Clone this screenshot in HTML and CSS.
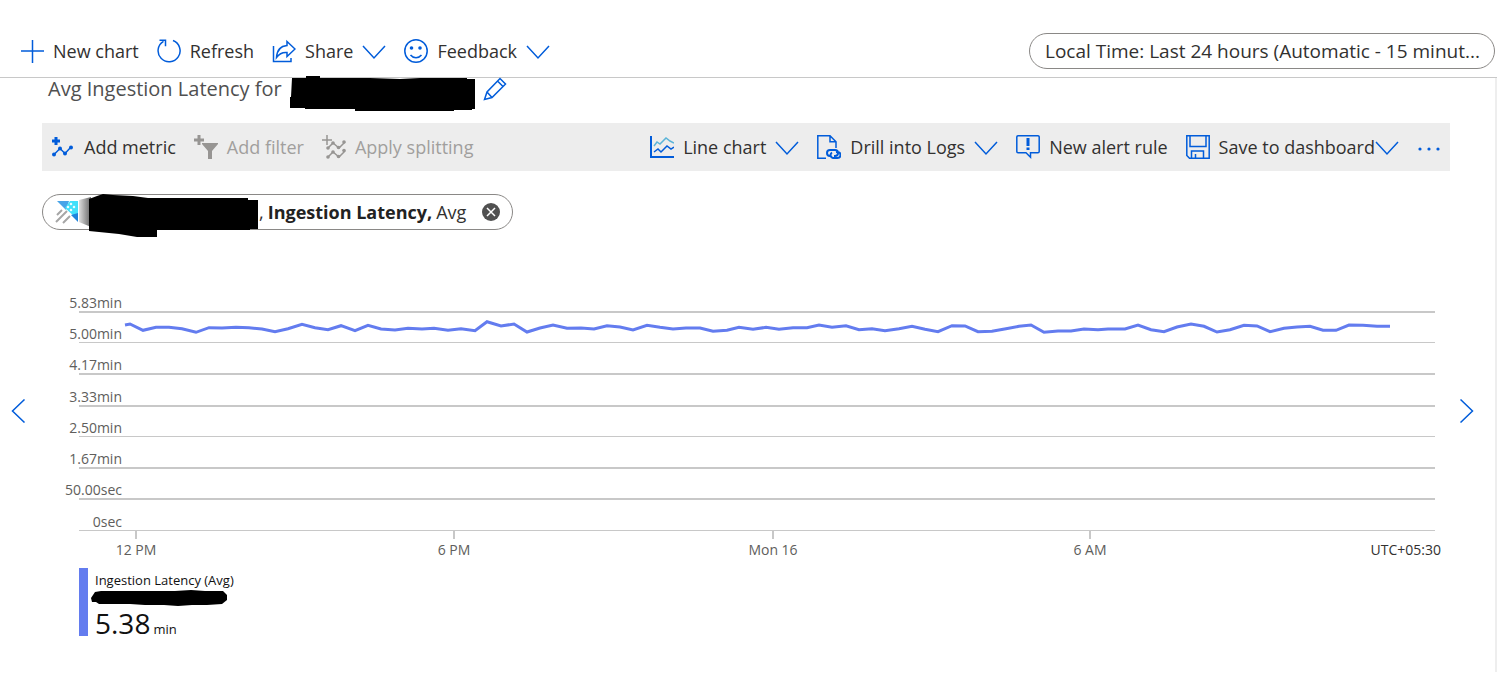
FILE: index.html
```html
<!DOCTYPE html>
<html lang="en">
<head>
  <meta charset="UTF-8">
  <meta name="viewport" content="width=device-width, initial-scale=1.0">
  <title>Metrics</title>
  <link rel="stylesheet" href="styles.css">
</head>
<body>

  <header class="command-bar">
    <button class="cmd">
      <svg class="icon" viewBox="0 0 24 24"><path d="M12.500 1v23M1 12h23"/></svg>
      New chart
    </button>
    <button class="cmd">
      <svg class="icon" viewBox="0 0 24 24"><path d="M16 1.500a11 11 0 1 1-9.500 .8M2.500 1.200h6v6"/></svg>
      Refresh
    </button>
    <button class="cmd">
      <svg class="icon" viewBox="0 0 24 24"><path d="M1.500 7v15.500H19V19M15 2.500l8 7.500-8 7.500V13.500C10 13 7 15 4.500 18.500 5 11 9 7 15 6.500z"/></svg>
      Share
      <svg class="icon" viewBox="0 0 24 24"><path d="M1 7l11 12L23 7"/></svg>
    </button>
    <button class="cmd">
      <svg class="icon" viewBox="0 0 24 24"><circle cx="12" cy="12" r="11.200"/><path d="M6.500 16c3 3.700 8 3.700 11 0"/><circle class="solid" cx="7.500" cy="9" r="1.800"/><circle class="solid" cx="16" cy="9" r="1.800"/></svg>
      Feedback
      <svg class="icon" viewBox="0 0 24 24"><path d="M1 7l11 12L23 7"/></svg>
    </button>
    <button class="time-range">Local Time: Last 24 hours (Automatic - 15 minut...</button>
  </header>

  <main class="blade">
    <div class="chart-title">
      <h1>Avg Ingestion Latency for</h1>
      <svg class="title-mask" viewBox="0 0 185 35"><path d="M2 2l14 0V0h14v2h50l30 1 20-1h47v1h18v30h-13v1h-18v1H65v-2H15v-1H0V21h1z"/></svg>
      <button class="edit" aria-label="Edit title">
        <svg class="icon" viewBox="0 0 24 24"><path d="M1.500 22.500L4 15 17 1.500l5.500 5.500L9 20.500zM4 15l5 5.500M14.500 4l5.500 5.500"/></svg>
      </button>
    </div>

    <div class="toolbar">
      <button class="cmd">
        <svg class="icon" viewBox="0 0 24 24"><path class="plus" d="M5 2v8M1 6h8"/><path d="M3 19.500l6-6 5 5L20 12"/><g class="solid"><circle cx="3" cy="19.500" r="2"/><circle cx="9" cy="13.500" r="2"/><circle cx="14" cy="18.500" r="2"/><circle cx="20" cy="12.500" r="2"/></g></svg>
        Add metric
      </button>
      <button class="cmd" disabled>
        <svg class="icon" viewBox="0 0 24 24"><path class="plus" d="M5 0v10M0 5h10"/><path class="solid" d="M8 8h16v1l-6 7v8h-4v-8L8 9z"/></svg>
        Add filter
      </button>
      <button class="cmd" disabled>
        <svg class="icon" viewBox="0 0 24 24"><path d="M5 0v10M0 5h10M6 13l5-5 6 5 6-6M6 22l5-5 6 5 6-6"/><g class="solid"><circle cx="6" cy="13" r="1.800"/><circle cx="11" cy="8" r="1.800"/><circle cx="16.500" cy="12.500" r="1.800"/><circle cx="22" cy="7" r="1.800"/><circle cx="6" cy="22" r="1.800"/><circle cx="11" cy="17" r="1.800"/><circle cx="16.500" cy="21.500" r="1.800"/><circle cx="22" cy="15.500" r="1.800"/></g></svg>
        Apply splitting
      </button>

      <div class="toolbar-right">
        <button class="cmd">
          <svg class="icon" viewBox="0 0 24 24"><path class="sky" d="M4 11l3-4 3 2 6-6 4 3 4 2"/><path d="M4 17l4-3 3 3 6-6 4 3 3-2"/><path class="axis" d="M1 1v21h23"/></svg>
          Line chart
          <svg class="icon" viewBox="0 0 24 24"><path d="M1 7l11 12L23 7"/></svg>
        </button>
        <button class="cmd">
          <svg class="icon" viewBox="0 0 24 24"><path d="M9 23.200H.8V.8H13l6 6V13M13 .8v6h6"/><path class="link" d="M14 21h-1a3 3 0 0 1 0-6h5a3 3 0 0 1 0 6h-1M19 17h1.500a3 3 0 0 1 0 6H16a3 3 0 0 1-1-5.500"/></svg>
          Drill into Logs
          <svg class="icon" viewBox="0 0 24 24"><path d="M1 7l11 12L23 7"/></svg>
        </button>
        <button class="cmd">
          <svg class="icon" viewBox="0 0 24 24"><path d="M2 .8h20a1.200 1.200 0 0 1 1.200 1.200v14.500a1.200 1.200 0 0 1-1.200 1.200h-7.500v4.500l-4.500-4.500H2a1.200 1.200 0 0 1-1.200-1.200V2A1.200 1.200 0 0 1 2 .8z"/><path class="mark" d="M12 3v8M12 12.500v2.500"/></svg>
          New alert rule
        </button>
        <button class="cmd save">
          <svg class="icon" viewBox="0 0 24 24"><path d="M.8.8h22.400v22.400H3.500L.8 20.500zM4 .8v10.700h16V.8M5.500 23v-7h12v7M9.500 23v-4"/></svg>
          <span>Save to dashboard</span>
          <svg class="icon" viewBox="0 0 24 24"><path d="M1 7l11 12L23 7"/></svg>
        </button>
        <button class="cmd" aria-label="More">
          <svg class="icon" viewBox="0 0 24 24"><g class="solid"><circle cx="3" cy="14" r="1.600"/><circle cx="12" cy="14" r="1.600"/><circle cx="21" cy="14" r="1.600"/></g></svg>
        </button>
      </div>
    </div>

    <div class="metric-pill">
      <svg class="icon resource" viewBox="0 0 24 24"><path fill="#48a4e8" d="M2 1h12l-3 9z"/><path fill="#42e0fa" d="M15 1h8v13l-3 3-10-9z"/><path fill="#1f83dc" d="M23 13v9l-7-7z"/><g fill="#fff"><path d="M16 2.500l1.500 1.500L16 5.500 14.500 4zM13 5.500L14.500 7 13 8.500 11.500 7zM19 5.500L20.500 7 19 8.500 17.500 7zM16 8.500l1.500 1.500-1.500 1.500-1.500-1.500z"/></g><path stroke="#a6a6a6" stroke-width="2" d="M2 15l5-5M1 22l11-11M8 23l7-7"/></svg>
      <svg class="pill-mask" viewBox="0 0 180 44"><defs><linearGradient id="fade"><stop offset="0" stop-color="#ddd"/><stop offset="1" stop-color="#666"/></linearGradient></defs><path fill="url(#fade)" d="M0 6l12-3v30L0 28z"/><path d="M10 5l8-3 6-2 10 1 20 1 15 2h100v2h10v29h-8v1H78v7H58l-18-3-30-3z"/></svg>
      <span class="comma">,</span>
      <strong>Ingestion Latency,</strong>
      <span>Avg</span>
      <button class="remove" aria-label="Remove metric">
        <svg viewBox="0 0 18 18"><circle cx="9" cy="9" r="9"/><path d="M5 5l8 8M13 5l-8 8"/></svg>
      </button>
    </div>

    <section class="chart">
      <button class="nav" aria-label="Previous">
        <svg class="icon" viewBox="0 0 24 24"><path d="M13.500 .5L1.500 12l12 11.500"/></svg>
      </button>

      <div class="plot">
        <div class="grid">
          <div class="line thick"><span>5.83min</span></div>
          <div class="line"><span>5.00min</span></div>
          <div class="line thick"><span>4.17min</span></div>
          <div class="line thick"><span>3.33min</span></div>
          <div class="line"><span>2.50min</span></div>
          <div class="line thick"><span>1.67min</span></div>
          <div class="line thick"><span>50.00sec</span></div>
          <div class="line"><span>0sec</span></div>
          <svg class="series" viewBox="79 281 1356 250" preserveAspectRatio="none">
            <polyline points="125,325 130,324 143,330.300 156,327.300 169,327.300 182,328.700 196,332.300 209,327.700 222,328 236,327.300 249,327.700 262,329 275,331.700 288,328.700 302,324.300 315,327.700 328,329.700 341,325.700 355,330.700 368,325.300 381,329 395,330 408,328.300 422,329 434,328.300 448,330.300 461,328.700 475,330.700 487,321.700 501,326 514,324 527,332 540,328 553,325 567,328.300 581,328 594,329 607,325.700 620,327 633,330 647,325.300 660,327.300 673,329 686,328 700,328 713,331.300 727,330.300 739,327.300 753,329.300 766,327.300 779,329.300 793,327.700 807,327.700 819,325 832,327.300 846,325.700 859,329.700 872,328.700 885,330.700 899,328.700 912,326.300 925,329.300 938,331.700 952,325.700 965,326 978,331.700 992,331.300 1006,328.700 1019,326.300 1031,325 1044,332.300 1058,331 1071,331 1084,329 1098,329.700 1108,329 1125,329 1138,325 1151,329.700 1164,331.700 1177,327 1191,324 1204,326.300 1217,332 1230,329.700 1244,325.300 1257,326 1270,331.700 1284,328.300 1297,327 1310,326.300 1323,330.300 1336,330.300 1349,325 1363,325.300 1377,326.300 1390,326.300"/>
          </svg>
        </div>
        <div class="x-axis">
          <span class="tick">12 PM</span>
          <span class="tick">6 PM</span>
          <span class="tick">Mon 16</span>
          <span class="tick">6 AM</span>
          <span class="zone">UTC+05:30</span>
        </div>
      </div>

      <button class="nav next" aria-label="Next">
        <svg class="icon" viewBox="0 0 24 24"><path d="M.5 .5L12.500 12 .5 23.500"/></svg>
      </button>
    </section>

    <div class="legend">
      <div class="legend-name">Ingestion Latency (Avg)</div>
      <svg class="legend-mask" viewBox="0 0 136 16"><path d="M0 8l4-6 6-1h44l30 0 16-1 14 1h18l4 4v5l-5 4-15 1-15 0-14 1-14-1H54l-15-1H8l-3-2H1z"/></svg>
      <div class="legend-value">5.38<small>min</small></div>
    </div>
  </main>

</body>
</html>
```
FILE: styles.css
```css
* { margin: 0; padding: 0; box-sizing: border-box; }

body {
  font-family: 'Open Sans', 'Noto Sans', sans-serif;
  font-size: 18px;
  line-height: 24px;
  color: #323130;
  background: #fff;
}

button {
  font: inherit;
  color: inherit;
  background: none;
  border: none;
  cursor: pointer;
  white-space: nowrap;
}

svg { display: block; flex-shrink: 0; }

.icon {
  width: 24px;
  height: 24px;
  fill: none;
  stroke: #015cda;
  stroke-width: 1.500;
}

.icon .solid { fill: #015cda; stroke: none; }
.icon .plus { stroke-width: 3; }
.icon .axis { stroke-width: 2; }
.icon .mark { stroke-width: 3; }
.icon .sky { stroke: #5bb4d8; }
.icon .link { stroke-width: 2; }
.icon.resource { stroke: none; }

.cmd {
  display: flex;
  align-items: center;
  gap: 9px;
}

.cmd:disabled { color: #a19f9d; }
.cmd:disabled .icon { stroke: #979593; }
.cmd:disabled .solid { fill: #979593; }

.command-bar {
  display: flex;
  align-items: center;
  gap: 18px;
  padding: 33px 2px 8px 20px;
  border-bottom: 1px solid #c8c8c8;
}

.time-range {
  width: 466px;
  height: 36px;
  margin-left: auto;
  padding: 0 15px;
  border: 1px solid #8a8886;
  border-radius: 18px;
  font-size: 19px;
  text-align: left;
  overflow: hidden;
}

.blade {
  min-height: 594px;
  border-right: 2px solid #eee;
}

.chart-title {
  display: flex;
  align-items: center;
  gap: 8px;
  height: 22px;
  padding-left: 48px;
}

.chart-title h1 {
  font-size: 20px;
  font-weight: 400;
  color: #505050;
}

.title-mask {
  width: 185px;
  height: 35px;
  margin-top: 8px;
  z-index: 1;
}

.toolbar {
  display: flex;
  align-items: center;
  gap: 18px;
  height: 48px;
  margin: 23px 45px 0 42px;
  padding: 0 9px;
  background: #ededed;
}

.toolbar-right {
  display: flex;
  align-items: center;
  gap: 18px;
  margin-left: auto;
}

.save .icon:last-child { margin-left: -9px; }

.metric-pill {
  display: flex;
  align-items: center;
  width: fit-content;
  height: 36px;
  margin: 23px 0 0 42px;
  padding: 0 12px;
  border: 1px solid #8a8886;
  border-radius: 18px;
}

.pill-mask {
  width: 180px;
  height: 44px;
  margin-top: 8px;
}

.comma { margin-right: 4px; }
.metric-pill strong { margin-right: 4px; color: #222; }

.remove { margin-left: 16px; }
.remove svg { width: 18px; height: 18px; fill: #505050; }
.remove path { stroke: #fff; stroke-width: 1.500; }

.chart {
  display: grid;
  grid-template-columns: 79px 1fr 60px;
  align-items: center;
  margin-top: 31px;
}

.nav { padding-left: 11px; }
.next { padding-left: 25px; }

.plot { padding-top: 20px; }

.grid {
  position: relative;
  display: flex;
  flex-direction: column;
  height: 250px;
}

.line {
  flex: 1;
  display: flex;
  align-items: flex-end;
  border-bottom: 1px solid #c8c8c8;
}

.line.thick { border-bottom-width: 2px; }

.line span {
  display: flex;
  justify-content: flex-end;
  width: 43px;
  font-size: 14px;
  line-height: 16px;
  color: #605e5c;
}

.series {
  position: absolute;
  inset: 0;
  width: 100%;
  height: 100%;
}

.series polyline {
  fill: none;
  stroke: #637cef;
  stroke-width: 3;
}

.x-axis {
  display: grid;
  grid-template-columns: 114fr 522fr 116fr 518fr 92fr;
  margin-right: -6px;
  font-size: 14px;
  line-height: 22px;
  color: #605e5c;
}

.tick { text-align: center; }

.tick::before {
  content: '';
  display: block;
  width: 2px;
  height: 8px;
  margin: 0 auto;
  background: #c8c8c8;
}

.zone {
  padding-top: 8px;
  text-align: right;
  white-space: nowrap;
  color: #323130;
}

.legend {
  width: fit-content;
  height: 68px;
  margin: 7px 0 0 79px;
  padding: 2px 0 0 7px;
  border-left: 9px solid #637cef;
  color: #111;
}

.legend-name {
  font-size: 13px;
  line-height: 20px;
}

.legend-mask {
  width: 136px;
  height: 16px;
  margin-left: -4px;
}

.legend-value {
  font-size: 28px;
  font-weight: 500;
  line-height: 34px;
}

.legend-value small {
  margin-left: 3px;
  font-size: 13px;
  font-weight: 400;
}
```
